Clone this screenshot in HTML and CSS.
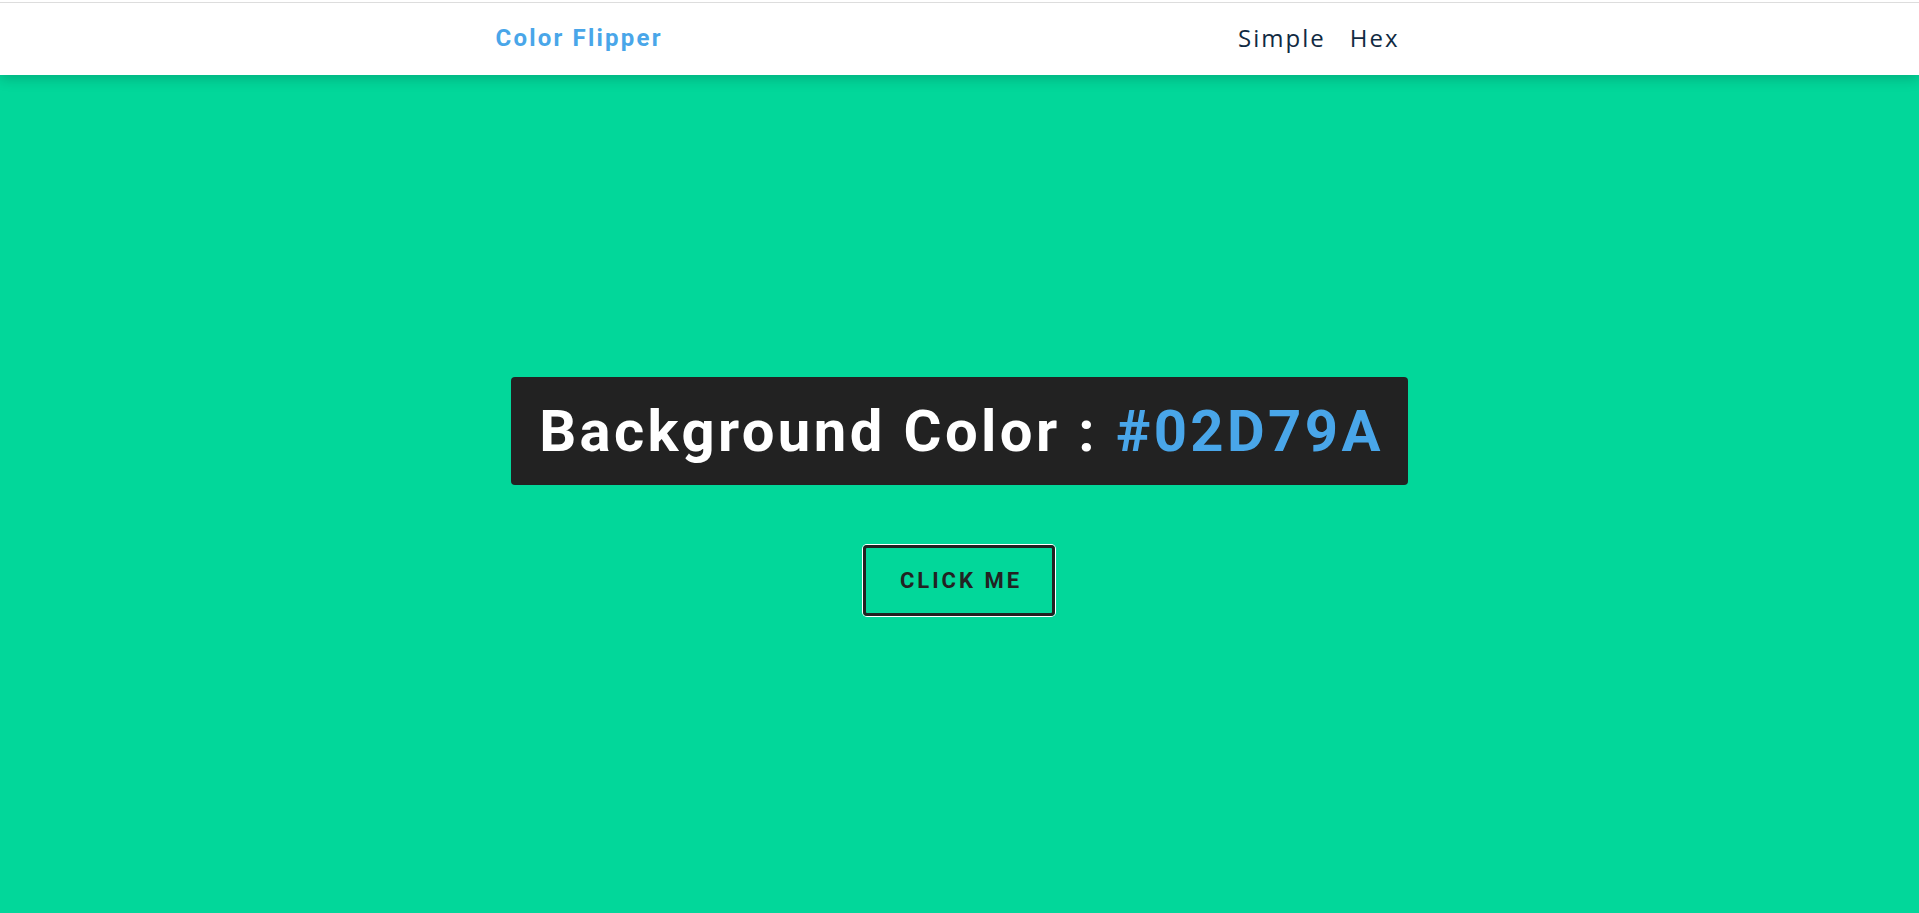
FILE: index.html
```html
<!DOCTYPE html>
<html lang="en">
<head>
<meta charset="UTF-8">
<title>Color Flipper</title>
<link rel="stylesheet" href="styles.css">
</head>
<body>
<nav class="nav">
  <div class="nav-center">
    <h4 class="brand">Color Flipper</h4>
    <ul class="nav-links">
      <li><a href="#">Simple</a></li>
      <li><a href="#">Hex</a></li>
    </ul>
  </div>
</nav>
<main class="main">
  <div class="container">
    <h2 class="title">Background Color : <span class="color">#02D79A</span></h2>
    <button class="btn-hero" type="button">Click Me</button>
  </div>
</main>
</body>
</html>
```

FILE: styles.css
```css
* {
  margin: 0;
  padding: 0;
  box-sizing: border-box;
}

html, body {
  height: 100%;
}

body {
  font-family: "Open Sans", sans-serif;
  background: #02d79a;
  color: #102a42;
  overflow: hidden;
}

.nav {
  position: relative;
  z-index: 1;
  height: 75px;
  background: linear-gradient(#ffffff 2px, #dddddd 2px, #dddddd 3px, #ffffff 3px);
  display: flex;
  align-items: center;
  box-shadow: 0 4px 12px rgba(0, 0, 0, 0.18);
}

.nav-center {
  width: 904px;
  margin-left: calc(50% - 464px);
  display: flex;
  justify-content: space-between;
  align-items: center;
}

.brand {
  font-family: Roboto, sans-serif;
  font-weight: 700;
  font-size: 24px;
  letter-spacing: 2.2px;
  color: #49a6e9;
}

.nav-links {
  list-style: none;
  display: flex;
  gap: 24px;
}

.nav-links a {
  text-decoration: none;
  font-family: "Open Sans", sans-serif;
  font-size: 24px;
  letter-spacing: 2px;
  color: #102a42;
}

.main {
  height: calc(100% - 75px);
  display: flex;
  align-items: center;
  justify-content: center;
  padding-top: 4px;
}

.container {
  display: flex;
  flex-direction: column;
  align-items: center;
  gap: 60px;
}

.title {
  font-family: Roboto, sans-serif;
  font-weight: 700;
  font-size: 58px;
  line-height: 76px;
  letter-spacing: 3.4px;
  color: #ffffff;
  background: #222222;
  border-radius: 4px;
  padding: 16px 24px 16px 28px;
}

.color {
  color: #49a6e9;
}

.btn-hero {
  font-family: Roboto, sans-serif;
  font-weight: 700;
  font-size: 22px;
  letter-spacing: 3px;
  text-transform: uppercase;
  color: #222222;
  background: transparent;
  border: 3px solid #222222;
  border-radius: 4px;
  box-shadow: 0 0 0 1px #ffffff;
  width: 192px;
  height: 71px;
  padding-left: 3px;
  cursor: pointer;
}
```
